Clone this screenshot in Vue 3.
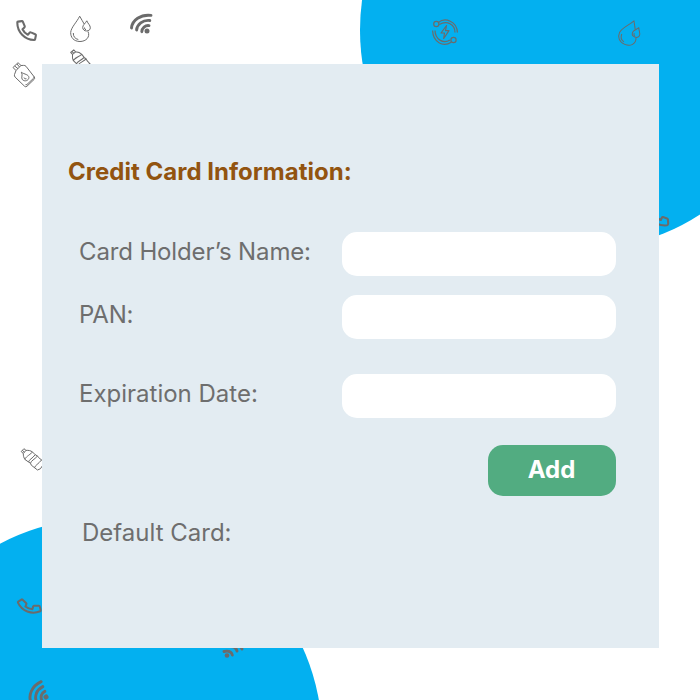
<script setup>
import { reactive } from 'vue'

const fields = reactive([
  { id: 'holder', label: 'Card Holder’s Name:', value: '' },
  { id: 'pan', label: 'PAN:', value: '' },
  { id: 'expiry', label: 'Expiration Date:', value: '' },
])
</script>

<template>
  <main class="page">
    <svg class="backdrop" viewBox="0 0 700 700" aria-hidden="true">
      <defs>
        <path id="phone" d="M1.3 2.4Q1.3 1.7 2 1.6L5.8 1.1Q6.5 1 6.8 1.7L8.7 6.2Q9 7 8.4 7.5L6.5 9.3Q8.2 13 11.8 14.7L13.6 12.7Q14.1 12 14.9 12.4L19.2 14.2Q20.1 14.6 19.9 15.4L19.1 19.2Q18.9 20 18.1 20C8.6 19.6 1.3 12 1.3 2.4Z" />
        <g id="wifi">
          <path d="M1.5 15C2.3 7.2 10.5 1.2 21 2.4M6.6 17C7.1 11.6 12.6 6.7 19.8 7.5M11.8 18.7C12 15 15.2 12.1 19 12.6" />
          <circle class="dot" cx="17" cy="18" r="2.5" />
        </g>
        <g id="drop">
          <path d="M18 16C20.5 21.5 16 26 10 26 3.5 26 .5 21.5.7 17 1 12 6.5 7 9.7.7 11.5 3.8 12.9 6.4 14.2 8.5M3.3 17.5C3.2 21 5 23.3 8.3 24" />
          <path d="M16.8 5.3C18 8.5 20.3 9.5 20.3 12.3 20.3 16.5 12.8 16.7 12.7 12 12.7 9.5 15.3 8 16.8 5.3ZM14.5 12Q14.4 14 16 14.3" />
        </g>
        <path id="bottle" d="M.7 3.6 3.4.7 5.5 2.4 2.8 5.4ZM1.8 2.4 4 4.2M2.8 5.4C2.8 8 3.2 9.5 4.5 11.5L8 14 10 15.2 10.8 17.2 17 22Q20 22 22.5 17M5.5 2.4C8 2.2 10 2.5 12 4L14.7 6.7 17 8 18 9.5 23 13.5M4.5 11.5C4.8 9 8.5 7.5 12 4M8 14C8.5 11.5 12 10.5 14.7 6.7M10 15.2C10.5 12.7 14 11.5 17 8M14 19.8C14.5 17.3 18 16 21 12" />
      </defs>

      <circle class="blob" cx="580" cy="30" r="220" />
      <circle class="blob" cx="102.5" cy="738" r="219.7" />

      <g class="bold">
        <use href="#phone" x="16" y="20" />
        <use href="#phone" transform="translate(15.8 601) rotate(-25) scale(.98)" />
        <path d="M656 217.5 660.8 220 662 217.5Q662.3 216.9 663 217.1L667 218.4Q667.8 218.7 667.9 219.5L668.2 223.6Q668.2 225 667 225.3Q662.5 226 656 223.5" />
      </g>
      <g class="wifi">
        <use href="#wifi" x="130" y="13" />
        <use href="#wifi" transform="translate(46 697) rotate(-32) translate(-17 -18)" />
        <path d="M224 651.5Q231 650 232.3 655M229 646.5Q236 646 237 651M236 645Q241 646 242 649" />
        <circle class="dot" cx="227" cy="655.5" r="2.3" />
      </g>
      <g class="fine">
        <use href="#drop" x="70" y="15.5" />
        <use href="#drop" transform="translate(634 20.8) rotate(22) translate(-9.7 -.7)" />
        <use href="#bottle" transform="translate(70.5 48.7) rotate(8)" />
        <use href="#bottle" x="20.5" y="448" />
        <g>
          <path d="M13 67.5 18 62.7 21 65.5 16 70.5ZM14.7 66 18 68.7M17 64 19.5 67M16 70.5 14.5 74.5Q14 76 15.2 77.2L24.5 86.2Q25.7 87.4 27 86.2L34 79.5Q35.2 78.3 34.3 77L26 66.3Q25 65.2 23.5 65.4L21 65.5M25.5 84.7Q27 85 28 83.5L33.5 78.3Q34 77.5 34 76.6" />
          <path d="M21.3 72.2C24.5 74.5 28.7 74.3 28.9 77.5 28.7 80.8 24.5 82 22.3 79.5 20.7 77.4 23.3 75 21.3 72.2ZM24 77.5Q24.5 79.5 26.5 78.8" />
        </g>
      </g>
      <g class="energy">
        <path d="M438.5 22.4C445 17.2 457 21 457.4 32.5M432.6 30.5C433 42 443 47.5 451.2 42.2M439.3 24.5C447 20 455 24.5 455 32.5M435 30.5C435.2 39 443 44.5 450 40M446.5 25.5 441 33H444.5L443.7 38.5 449 30.7H445.5Z" />
        <circle cx="436.3" cy="24" r="2.6" />
        <circle cx="453.5" cy="40" r="2.6" />
      </g>
    </svg>

    <section class="panel">
      <h1 class="title">Credit Card Information:</h1>
      <form class="form" @submit.prevent>
        <div v-for="field in fields" :key="field.id" class="row" :class="field.id">
          <label class="label" :for="field.id">{{ field.label }}</label>
          <input :id="field.id" v-model="field.value" class="input" type="text" autocomplete="off" />
        </div>
        <button class="add" type="submit">Add</button>
      </form>
      <p class="default-card">Default Card:</p>
    </section>
  </main>
</template>

<style>
body {
  margin: 0;
  background: #fff;
}
</style>

<style scoped>
.page {
  position: relative;
  box-sizing: border-box;
  width: 700px;
  height: 700px;
  padding: 64px 41px 52px 42px;
  overflow: hidden;
  font-family: Inter, sans-serif;
  font-size: 24px;
  font-weight: 400;
  line-height: 30px;
  color: #6e6e6e;
}
.backdrop {
  position: absolute;
  inset: 0;
  width: 700px;
  height: 700px;
  fill: none;
  stroke: #6b6b6b;
  stroke-linejoin: round;
}
.blob {
  fill: #03b0f0;
  stroke: none;
}
.bold {
  stroke-width: 2.1;
}
.wifi {
  stroke-width: 2.9;
  stroke-linecap: round;
}
.dot {
  fill: #6b6b6b;
  stroke: none;
}
.fine {
  stroke-width: 1;
}
.energy {
  stroke-width: 1.2;
}
.panel {
  position: relative;
  box-sizing: border-box;
  height: 584px;
  padding: 93px 43px 0 26px;
  background: #e3ecf2;
}
.title {
  margin: 0;
  font-size: 24px;
  font-weight: 700;
  line-height: 30px;
  letter-spacing: 0.02px;
  color: #925410;
}
.form {
  display: flex;
  flex-direction: column;
  padding: 45px 0 0 11px;
}
.row {
  display: grid;
  grid-template-columns: 263px 274px;
  height: 44px;
  margin-bottom: 19px;
}
.row.holder {
  letter-spacing: -0.14px;
}
.row.pan {
  margin-bottom: 35px;
  letter-spacing: -0.2px;
}
.row.expiry {
  margin-bottom: 27px;
}
.label {
  padding-top: 5px;
  white-space: nowrap;
}
.input {
  box-sizing: border-box;
  width: 100%;
  height: 44px;
  padding: 0 14px;
  border: 0;
  border-radius: 15px;
  background: #fff;
  font: inherit;
  color: inherit;
}
.add {
  align-self: flex-end;
  width: 128px;
  height: 51px;
  padding: 0 1px 2px 0;
  border: 0;
  border-radius: 15px;
  background: #52ac81;
  font: 700 24px/30px Inter, sans-serif;
  color: #fff;
}
.default-card {
  margin: 22px 0 0 14px;
}
</style>
